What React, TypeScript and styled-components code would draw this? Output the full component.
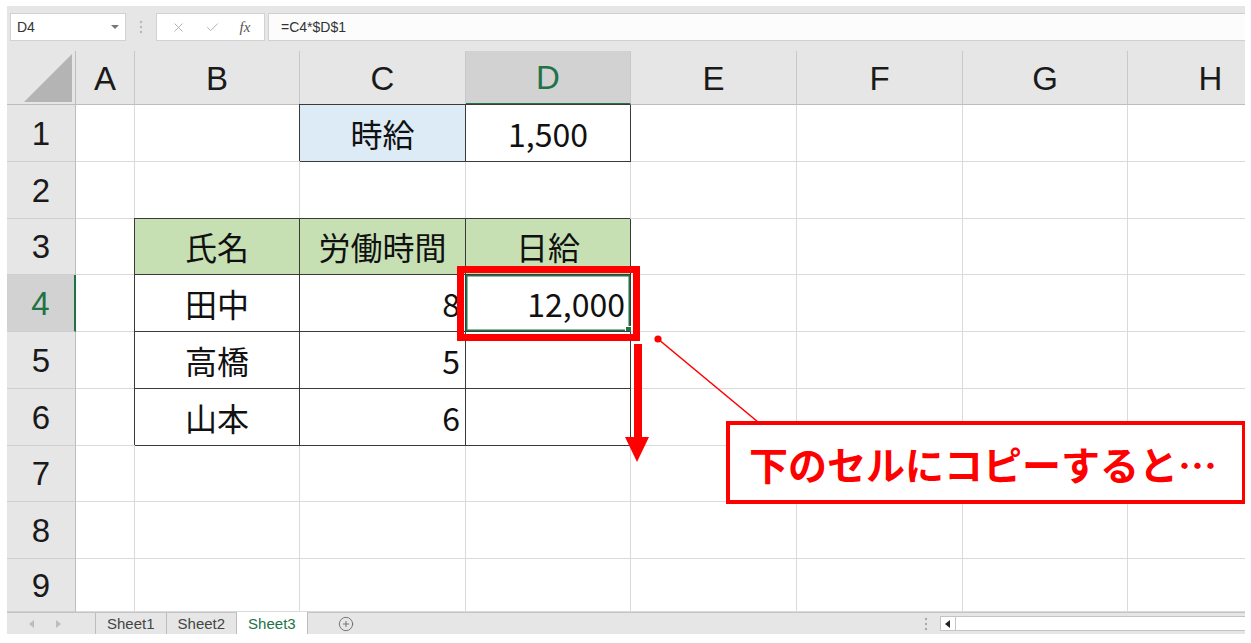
import React from 'react';
import styled, { createGlobalStyle } from 'styled-components';
import { X, Check, CirclePlus } from 'lucide-react';

const GREEN = '#217346';
const RED = '#ff0000';
const JP = '"Noto Sans CJK JP", "Noto Sans", sans-serif';

const GlobalStyle = createGlobalStyle`
  html, body {
    margin: 0;
    padding: 0;
    background: #fff;
  }
  body {
    font-family: "Liberation Sans", Arial, sans-serif;
  }
`;

const Window = styled.div`
  width: 1251px;
  height: 643px;
  padding: 6px 6px 0 7px;
  box-sizing: border-box;
  overflow: hidden;
  background: #fff;
`;

const Frame = styled.div`
  width: 1238px;
  display: flex;
  flex-direction: column;
  overflow: hidden;
  background: #e6e6e6;
`;

const FormulaBar = styled.div`
  height: 45px;
  display: flex;
  align-items: flex-start;
  padding: 7px 0 0 3px;
  box-sizing: border-box;
`;

const NameBox = styled.div`
  width: 116px;
  height: 28px;
  box-sizing: border-box;
  display: flex;
  align-items: center;
  justify-content: space-between;
  padding: 0 6px 0 6px;
  background: #fff;
  border: 1px solid #d2d2d2;
  font-size: 14px;
  color: #333;
`;

const Grip = styled.div`
  width: 30px;
  height: 28px;
  display: flex;
  align-items: center;
  justify-content: center;
`;

const FuncBox = styled.div`
  width: 109px;
  height: 28px;
  box-sizing: border-box;
  display: flex;
  align-items: center;
  justify-content: space-around;
  padding: 0 4px;
  background: #fff;
  border: 1px solid #d2d2d2;
  color: #a8a8a8;
`;

const Fx = styled.span`
  font-family: "Liberation Serif", "Times New Roman", serif;
  font-style: italic;
  font-size: 15px;
  color: #555;
`;

const FormulaInput = styled.div`
  flex: 1;
  height: 28px;
  margin-left: 3px;
  box-sizing: border-box;
  display: flex;
  align-items: center;
  padding-left: 12px;
  background: #fcfcfc;
  border-top: 1px solid #cfcfcf;
  border-bottom: 1px solid #cfcfcf;
  border-left: 1px solid #d2d2d2;
  font-size: 14px;
  color: #333;
`;

/* column H continues past the window edge, so it is wider than what shows */
const Sheet = styled.div`
  position: relative;
  width: 1238px;
  display: grid;
  grid-template-columns: 69px 59px 165px 166px 165px 166px 166px 165px 166px;
  grid-template-rows: 54px repeat(8, 56.75px) 53px;
  background: #fff;
  overflow: hidden;
`;

const Corner = styled.div`
  display: flex;
  justify-content: flex-end;
  align-items: flex-end;
  padding: 0 3px 2px 0;
  box-sizing: border-box;
  background: #e6e6e6;
  border-right: 1px solid #bdbdbd;
  border-bottom: 1px solid #bdbdbd;
`;

const CornerMark = styled.div`
  width: 48px;
  height: 48px;
  background: #b4b4b4;
  clip-path: polygon(100% 0, 100% 100%, 0 100%);
`;

const ColHead = styled.div<{ $active?: boolean }>`
  display: flex;
  align-items: center;
  justify-content: center;
  box-sizing: border-box;
  padding-top: 2px;
  background: ${p => (p.$active ? '#d2d2d2' : '#e6e6e6')};
  color: ${p => (p.$active ? GREEN : '#1a1a1a')};
  border-right: 1px solid #c8c8c8;
  border-bottom: ${p => (p.$active ? `2px solid ${GREEN}` : '1px solid #bdbdbd')};
  font-size: 33px;
`;

const RowHead = styled.div<{ $active?: boolean }>`
  display: flex;
  align-items: center;
  justify-content: center;
  box-sizing: border-box;
  padding-top: 2px;
  background: ${p => (p.$active ? '#d2d2d2' : '#e6e6e6')};
  color: ${p => (p.$active ? GREEN : '#1a1a1a')};
  border-right: ${p => (p.$active ? `2px solid ${GREEN}` : '1px solid #bdbdbd')};
  border-bottom: 1px solid #cfcfcf;
  font-size: 33px;
`;

const Cell = styled.div<{
  $align: 'center' | 'right';
  $fill: string;
  $boxed?: boolean;
  $selected?: boolean;
}>`
  position: relative;
  display: flex;
  align-items: center;
  justify-content: ${p => (p.$align === 'right' ? 'flex-end' : 'center')};
  padding: 0 5px;
  box-sizing: border-box;
  background: ${p => p.$fill};
  border-right: 1px solid ${p => (p.$boxed ? '#3a3a3a' : '#dadada')};
  border-bottom: 1px solid ${p => (p.$boxed ? '#3a3a3a' : '#dadada')};
  box-shadow: ${p =>
    [p.$boxed ? '-1px -1px 0 #3a3a3a' : '', p.$selected ? `inset 0 0 0 1.5px ${GREEN}` : '']
      .filter(Boolean)
      .join(', ') || 'none'};
  font-family: ${JP};
  font-size: 32px;
  line-height: 1;
  color: #111;
  white-space: nowrap;
`;

const FillHandle = styled.span`
  position: absolute;
  right: -2px;
  bottom: -2px;
  width: 5px;
  height: 5px;
  background: ${GREEN};
  border: 1px solid #fff;
`;

const RedFrame = styled.div`
  position: absolute;
  left: 450px;
  top: 215px;
  width: 183px;
  height: 75px;
  box-sizing: border-box;
  border: 7px solid ${RED};
`;

const Arrow = styled.svg`
  position: absolute;
  left: 618px;
  top: 293px;
`;

const Connector = styled.svg`
  position: absolute;
  left: 638px;
  top: 282px;
`;

const Callout = styled.div`
  position: absolute;
  left: 719px;
  top: 370px;
  width: 520px;
  height: 83px;
  box-sizing: border-box;
  display: flex;
  align-items: center;
  justify-content: center;
  padding-right: 6px;
  background: #fff;
  border: 4px solid ${RED};
  font-family: ${JP};
  font-weight: 700;
  font-size: 39px;
  color: ${RED};
`;

const TabBar = styled.div`
  height: 22px;
  display: flex;
  align-items: stretch;
  box-sizing: border-box;
  border-top: 1px solid #c4c4c4;
  background: #e6e6e6;
  font-size: 15px;
  color: #444;
`;

const TabNav = styled.div`
  width: 88px;
  display: flex;
  align-items: center;
  gap: 19px;
  padding-left: 21px;
  box-sizing: border-box;
`;

const Tab = styled.div<{ $active?: boolean }>`
  display: flex;
  align-items: center;
  padding: 0 11px;
  margin-top: ${p => (p.$active ? '-1px' : '0')};
  border-left: 1px solid #bdbdbd;
  border-right: ${p => (p.$active ? '1px solid #bdbdbd' : 'none')};
  background: ${p => (p.$active ? '#fff' : 'transparent')};
  color: ${p => (p.$active ? GREEN : '#444')};
`;

const AddSheet = styled.div`
  display: flex;
  align-items: center;
  margin-left: 30px;
  color: #666;
`;

const Spacer = styled.div`
  flex: 1;
`;

const ScrollGrip = styled.div`
  width: 28px;
  display: flex;
  align-items: center;
  justify-content: center;
`;

const HScroll = styled.div`
  width: 305px;
  height: 15px;
  align-self: center;
  display: flex;
  box-sizing: border-box;
  background: #fff;
  border: 1px solid #c4c4c4;
  border-right: none;
`;

const ScrollBtn = styled.div`
  width: 14px;
  display: flex;
  align-items: center;
  justify-content: center;
  border-right: 1px solid #c4c4c4;
`;

const Dots = ({ color = '#b8b8b8' }: { color?: string }) => (
  <svg width="4" height="14" viewBox="0 0 4 14">
    <circle cx="2" cy="2" r="1.2" fill={color} />
    <circle cx="2" cy="7" r="1.2" fill={color} />
    <circle cx="2" cy="12" r="1.2" fill={color} />
  </svg>
);

const Tri = ({ dir, color }: { dir: 'left' | 'right' | 'down'; color: string }) => {
  const pts = dir === 'left' ? '6,0 6,8 1,4' : dir === 'right' ? '1,0 1,8 6,4' : '0,2 8,2 4,6';
  return (
    <svg width="8" height="8" viewBox="0 0 8 8">
      <polygon points={pts} fill={color} />
    </svg>
  );
};

type CellSpec = {
  text?: string;
  align?: 'center' | 'right';
  fill?: string;
  boxed?: boolean;
  selected?: boolean;
};

const cols = ['A', 'B', 'C', 'D', 'E', 'F', 'G', 'H'];
const rows = [1, 2, 3, 4, 5, 6, 7, 8, 9];

const cells: Record<string, CellSpec> = {
  C1: { text: '時給', fill: '#ddebf7', boxed: true },
  D1: { text: '1,500', boxed: true },
  B3: { text: '氏名', fill: '#c6e0b4', boxed: true },
  C3: { text: '労働時間', fill: '#c6e0b4', boxed: true },
  D3: { text: '日給', fill: '#c6e0b4', boxed: true },
  B4: { text: '田中', boxed: true },
  C4: { text: '8', align: 'right', boxed: true },
  D4: { text: '12,000', align: 'right', boxed: true, selected: true },
  B5: { text: '高橋', boxed: true },
  C5: { text: '5', align: 'right', boxed: true },
  D5: { boxed: true },
  B6: { text: '山本', boxed: true },
  C6: { text: '6', align: 'right', boxed: true },
  D6: { boxed: true },
};

const App: React.FC = () => {
  return (
    <Window>
      <GlobalStyle />
      <Frame>
        <FormulaBar>
          <NameBox>
            <span>D4</span>
            <Tri dir="down" color="#777" />
          </NameBox>
          <Grip>
            <Dots />
          </Grip>
          <FuncBox>
            <X size={15} strokeWidth={1.4} />
            <Check size={15} strokeWidth={1.4} />
            <Fx>fx</Fx>
          </FuncBox>
          <FormulaInput>=C4*$D$1</FormulaInput>
        </FormulaBar>

        <Sheet>
          <Corner>
            <CornerMark />
          </Corner>
          {cols.map(c => (
            <ColHead key={c} $active={c === 'D'}>
              {c}
            </ColHead>
          ))}
          {rows.map(r => (
            <React.Fragment key={r}>
              <RowHead $active={r === 4}>{r}</RowHead>
              {cols.map(c => {
                const spec = cells[`${c}${r}`] || {};
                return (
                  <Cell
                    key={c}
                    $align={spec.align || 'center'}
                    $fill={spec.fill || '#fff'}
                    $boxed={spec.boxed}
                    $selected={spec.selected}
                  >
                    {spec.text}
                    {spec.selected && <FillHandle />}
                  </Cell>
                );
              })}
            </React.Fragment>
          ))}
          <RedFrame />
          <Arrow width="24" height="120" viewBox="0 0 24 120">
            <rect x="9" y="0" width="8" height="95" fill={RED} />
            <polygon points="0,93 24,93 12,118" fill={RED} />
          </Arrow>
          <Connector width="120" height="95" viewBox="0 0 120 95">
            <line x1="13" y1="6" x2="113" y2="89" stroke={RED} strokeWidth="1.6" />
            <circle cx="13" cy="6" r="3.6" fill={RED} />
          </Connector>
          <Callout>下のセルにコピーすると…</Callout>
        </Sheet>

        <TabBar>
          <TabNav>
            <Tri dir="left" color="#bcbcbc" />
            <Tri dir="right" color="#bcbcbc" />
          </TabNav>
          <Tab>Sheet1</Tab>
          <Tab>Sheet2</Tab>
          <Tab $active>Sheet3</Tab>
          <AddSheet>
            <CirclePlus size={16} strokeWidth={1.3} />
          </AddSheet>
          <Spacer />
          <ScrollGrip>
            <Dots color="#aaa" />
          </ScrollGrip>
          <HScroll>
            <ScrollBtn>
              <Tri dir="left" color="#222" />
            </ScrollBtn>
          </HScroll>
        </TabBar>
      </Frame>
    </Window>
  );
};

export default App;
